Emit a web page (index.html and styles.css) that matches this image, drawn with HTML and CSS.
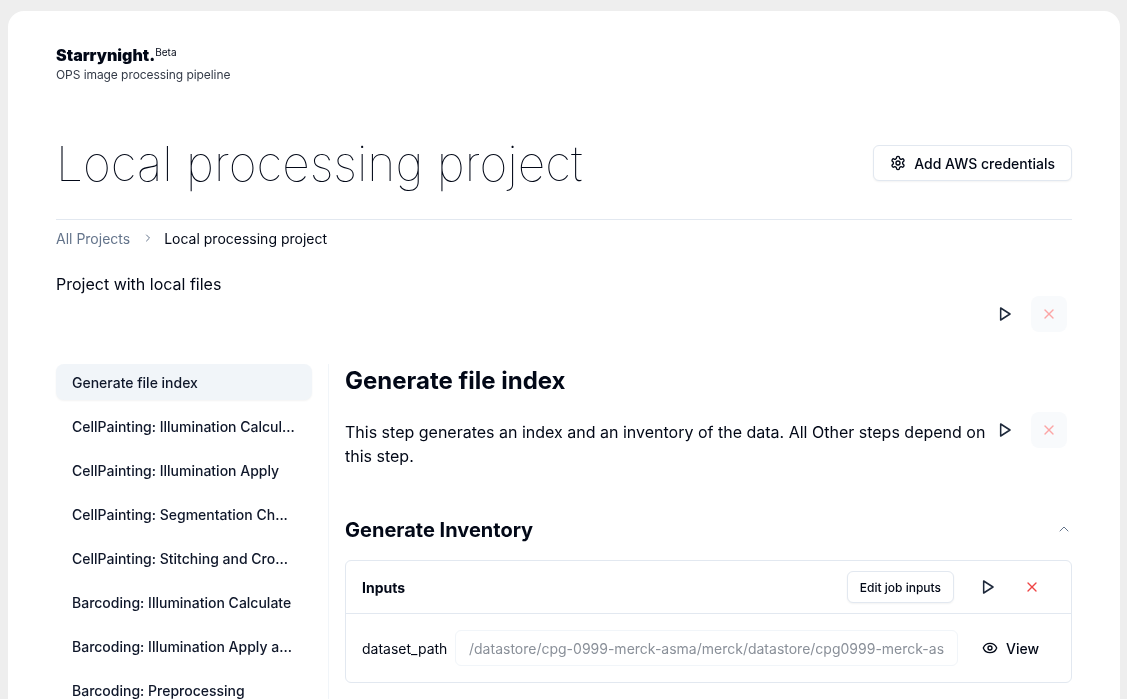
FILE: index.html
```html
<!DOCTYPE html>
<html lang="en">
<head>
<meta charset="utf-8">
<title>Local processing project</title>
<link rel="stylesheet" href="styles.css">
</head>
<body>
<div class="card">
  <header class="brand">
    <div class="logo">Starrynight.<sup class="beta">Beta</sup></div>
    <div class="tagline">OPS image processing pipeline</div>
  </header>
  <div class="title-row">
    <h1 class="title">Local processing project</h1>
    <button class="btn btn-aws">
      <svg class="icon" viewBox="0 0 24 24"><path d="M12.22 2h-.44a2 2 0 0 0-2 2v.18a2 2 0 0 1-1 1.73l-.43.25a2 2 0 0 1-2 0l-.15-.08a2 2 0 0 0-2.73.73l-.22.38a2 2 0 0 0 .73 2.73l.15.1a2 2 0 0 1 1 1.72v.51a2 2 0 0 1-1 1.74l-.15.09a2 2 0 0 0-.73 2.73l.22.38a2 2 0 0 0 2.73.73l.15-.08a2 2 0 0 1 2 0l.43.25a2 2 0 0 1 1 1.73V20a2 2 0 0 0 2 2h.44a2 2 0 0 0 2-2v-.18a2 2 0 0 1 1-1.73l.43-.25a2 2 0 0 1 2 0l.15.08a2 2 0 0 0 2.73-.73l.22-.39a2 2 0 0 0-.73-2.73l-.15-.08a2 2 0 0 1-1-1.74v-.5a2 2 0 0 1 1-1.74l.15-.09a2 2 0 0 0 .73-2.73l-.22-.38a2 2 0 0 0-2.73-.73l-.15.08a2 2 0 0 1-2 0l-.43-.25a2 2 0 0 1-1-1.73V4a2 2 0 0 0-2-2z"/><circle cx="12" cy="12" r="3"/></svg>
      <span class="btn-label">Add AWS credentials</span>
    </button>
  </div>
  <nav class="crumbs">
    <span class="crumb-link">All Projects</span>
    <svg class="crumb-sep" viewBox="0 0 24 24"><path d="m9 18 6-6-6-6"/></svg>
    <span class="crumb-current">Local processing project</span>
  </nav>
  <p class="desc">Project with local files</p>
  <div class="actions actions-top">
    <button class="icon-btn"><svg class="icon play" viewBox="0 0 24 24"><polygon points="5.5 3 19.5 12 5.5 21 5.5 3"/></svg></button>
    <button class="icon-btn muted"><svg class="icon" viewBox="0 0 24 24"><path d="M18 6 6 18"/><path d="m6 6 12 12"/></svg></button>
  </div>
  <div class="columns">
    <aside class="side">
      <div class="side-item active">Generate file index</div>
      <div class="side-item">CellPainting: Illumination Calcul...</div>
      <div class="side-item">CellPainting: Illumination Apply</div>
      <div class="side-item">CellPainting: Segmentation Ch...</div>
      <div class="side-item">CellPainting: Stitching and Cro...</div>
      <div class="side-item">Barcoding: Illumination Calculate</div>
      <div class="side-item">Barcoding: Illumination Apply a...</div>
      <div class="side-item">Barcoding: Preprocessing</div>
    </aside>
    <main class="main">
      <h2 class="step-title">Generate file index</h2>
      <div class="step-row">
        <p class="step-text">This step generates an index and an inventory of the data. All Other steps depend on this step.</p>
        <div class="actions">
          <button class="icon-btn"><svg class="icon play" viewBox="0 0 24 24"><polygon points="5.5 3 19.5 12 5.5 21 5.5 3"/></svg></button>
          <button class="icon-btn muted"><svg class="icon" viewBox="0 0 24 24"><path d="M18 6 6 18"/><path d="m6 6 12 12"/></svg></button>
        </div>
      </div>
      <div class="job-head">
        <h3 class="job-title">Generate Inventory</h3>
        <svg class="chev" viewBox="0 0 24 24"><path d="m18 15-6-6-6 6"/></svg>
      </div>
      <section class="panel">
        <div class="panel-head">
          <span class="panel-title">Inputs</span>
          <div class="panel-actions">
            <button class="btn btn-edit">Edit job inputs</button>
            <button class="icon-btn plain"><svg class="icon play" viewBox="0 0 24 24"><polygon points="5.5 3 19.5 12 5.5 21 5.5 3"/></svg></button>
            <button class="icon-btn plain danger"><svg class="icon" viewBox="0 0 24 24"><path d="M18 6 6 18"/><path d="m6 6 12 12"/></svg></button>
          </div>
        </div>
        <div class="panel-row">
          <span class="field-label">dataset_path</span>
          <input class="field" readonly value="/datastore/cpg-0999-merck-asma/merck/datastore/cpg0999-merck-asma/merck/inputs">
          <button class="view"><svg class="icon" viewBox="0 0 24 24"><path d="M2.06 12.35a1 1 0 0 1 0-.7 10.75 10.75 0 0 1 19.88 0 1 1 0 0 1 0 .7 10.75 10.75 0 0 1-19.88 0"/><circle cx="12" cy="12" r="3"/></svg>View</button>
        </div>
      </section>
    </main>
  </div>
</div>
</body>
</html>
```
FILE: styles.css
```css
* { box-sizing: border-box; }
html, body { height: 100%; overflow: hidden; }
body {
  margin: 0;
  padding: 11px 7px 0 8px;
  background: #eeeeee;
  color: #020817;
  font-family: Inter, "Liberation Sans", sans-serif;
}
button, input { font-family: inherit; cursor: pointer; }
h1, h2, h3, p { margin: 0; }
.card {
  background: #fff;
  border-radius: 16px 16px 0 0;
  padding: 32px 48px 0;
  height: 720px;
  will-change: transform;
}
.brand { height: 42px; }
.logo { font-size: 16px; font-weight: 900; line-height: 24px; }
.beta { font-size: 10px; font-weight: 400; line-height: 0; vertical-align: 5px; }
.tagline { font-size: 12px; line-height: 16px; color: #333a47; letter-spacing: -0.07px; }
.title-row {
  display: flex;
  align-items: center;
  justify-content: space-between;
  margin-top: 41px;
  height: 94px;
  padding-bottom: 20px;
  border-bottom: 1px solid #e2e8f0;
}
.title { font-size: 48px; font-weight: 100; line-height: 56px; padding-top: 3px; }
.icon { width: 16px; height: 16px; fill: none; stroke: currentColor; stroke-width: 2; stroke-linecap: round; stroke-linejoin: round; display: block; flex: none; }
.play { color: #1e293b; stroke-width: 2.3; }
.btn {
  display: flex;
  align-items: center;
  background: #fff;
  border: 1px solid #e2e8f0;
  border-radius: 6px;
  color: #020817;
  font-weight: 500;
  box-shadow: 0 1px 2px rgba(0,0,0,.05);
}
.btn-aws { height: 36px; padding: 0 16px; gap: 8px; font-size: 14px; }
.btn-label { padding-top: 2px; }
.crumbs { display: flex; align-items: center; font-size: 14px; line-height: 20px; margin-top: 9px; }
.crumb-link { color: #64748b; }
.crumb-sep { width: 12px; height: 12px; fill: none; stroke: #64748b; stroke-width: 2; stroke-linecap: round; stroke-linejoin: round; margin: -2px 10px 0 12px; }
.desc { font-size: 16px; line-height: 24px; margin-top: 23px; }
.actions { display: flex; align-items: center; gap: 8px; padding-right: 5px; }
.actions-top { justify-content: flex-end; }
.icon-btn {
  width: 36px;
  height: 36px;
  border: 0;
  border-radius: 6px;
  background: transparent;
  color: #020817;
  display: flex;
  align-items: center;
  justify-content: center;
  padding: 0;
}
.icon-btn.muted { background: #f8fafc; color: #fca5a5; border-radius: 8px; }
.icon-btn.danger { color: #ef4444; }
.columns { display: flex; margin-top: 32px; }
.side { width: 272px; padding-right: 16px; display: flex; flex-direction: column; gap: 8px; flex: none; }
.side-item { height: 36px; padding: 1px 16px 0; display: flex; align-items: center; font-size: 14px; font-weight: 500; color: #0f172a; border-radius: 8px; white-space: nowrap; }
.side-item.active { background: #f1f5f9; box-shadow: 0 1px 2px rgba(0,0,0,.05); }
.main { flex: 1; min-width: 0; border-left: 1px solid #f1f5f9; padding-left: 16px; }
.step-title { font-size: 24px; font-weight: 700; line-height: 32px; padding-top: 1px; height: 34px; }
.step-row { display: flex; align-items: flex-start; margin-top: 14px; }
.step-text { flex: 1; font-size: 16px; line-height: 24px; padding-top: 8px; }
.job-head { display: flex; align-items: center; justify-content: space-between; margin-top: 44px; height: 36px; }
.job-title { font-size: 20px; font-weight: 700; line-height: 28px; }
.chev { width: 16px; height: 16px; fill: none; stroke: #64748b; stroke-width: 1.5; stroke-linecap: round; stroke-linejoin: round; margin-top: -2px; }
.panel { border: 1px solid #e2e8f0; border-radius: 6px; margin-top: 12px; }
.panel-head { display: flex; align-items: center; justify-content: space-between; height: 53px; padding: 0 16px; border-bottom: 1px solid #e2e8f0; }
.panel-title { font-size: 14px; font-weight: 700; }
.panel-actions { display: flex; align-items: center; gap: 8px; padding-right: 5px; }
.btn-edit { height: 32px; padding: 0 12px; font-size: 12px; margin-right: 8px; }
.panel-row { display: flex; align-items: center; height: 68px; padding: 0 16px; }
.field-label { font-size: 14px; width: 93px; flex: none; }
.field { width: 503px; height: 36px; border: 1px solid #f1f5f9; border-radius: 6px; padding: 0 12px 0 13px; flex: none; font-size: 14px; color: #8a9099; background: #fff; outline: none; }
.view { display: flex; align-items: center; gap: 8px; margin-left: 8px; height: 36px; padding: 0 16px; border: 0; background: transparent; color: #020817; font-size: 14px; font-weight: 500; }
```
